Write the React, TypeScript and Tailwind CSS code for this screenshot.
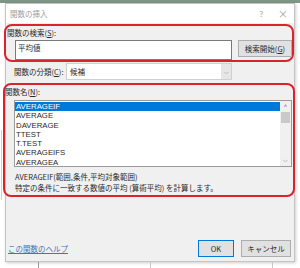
const FUNCS = ["AVERAGEIF", "AVERAGE", "DAVERAGE", "TTEST", "T.TEST", "AVERAGEIFS", "AVERAGEA"];

export default function App() {
  return (
    <div className="relative h-[268px] w-[300px] overflow-hidden whitespace-nowrap bg-white text-[7.5px] text-[#2a2a2a] [font-family:'Noto_Sans_CJK_JP','Noto_Sans',sans-serif]">
      <div className="h-[3px] bg-[#7f9585]" />
      {/* spreadsheet remnants around the dialog */}
      <div className="absolute bottom-0 left-[38px] h-[6px] w-px bg-[#9a9a9a]" />
      <div className="absolute bottom-0 left-[150px] h-[6px] w-px bg-[#c8c8c8]" />
      <div className="absolute bottom-0 left-[272px] h-[6px] w-px bg-[#c8c8c8]" />
      <div className="absolute left-[1px] top-[130px] h-[70px] w-px bg-[#d0d0d0]" />

      <div className="ml-[5px] flex h-[259px] w-[290px] flex-col border border-[#c4c4c4] bg-[#f0f0f0] shadow-[1px_1px_3px_rgba(0,0,0,0.2)]">
        <div className="flex h-[19px] items-center bg-white pl-[4px] pr-[6px]">
          <span className="text-[#a0a0a0]">関数の挿入</span>
          <span className="ml-auto mr-[15px] text-[#a0a0a0]">?</span>
          <span className="text-[10px] leading-none text-[#a0a0a0]">×</span>
        </div>

        {/* search */}
        <div className="-ml-[2px] mt-[1px] h-[38px] w-[290px] rounded-[8px] border-2 border-[#d9232d]">
          <div className="h-[14px] pl-[1px] leading-[14px]">
            関数の検索(<span className="underline">S</span>):
          </div>
          <div className="flex items-start">
            <div className="ml-[9px] h-[20px] w-[217px] border border-[#7a7a7a] bg-white pl-[2px] leading-[13px]">
              平均値
            </div>
            <div className="ml-[6px] flex h-[17px] w-[54px] items-center justify-center border border-[#adadad] bg-[#e1e1e1]">
              検索開始(<span className="underline">G</span>)
            </div>
          </div>
        </div>

        {/* category */}
        <div className="mt-[1px] flex h-[17px] items-center">
          <span className="ml-[8px] w-[52px]">
            関数の分類(<span className="underline">C</span>):
          </span>
          <div className="flex h-[17px] w-[166px] items-stretch border border-[#d0d0d0] bg-white">
            <span className="flex-1 pl-[3px] leading-[15px]">候補</span>
            <span className="flex w-[10px] items-center justify-center bg-[#e6e6e6] text-[6px] text-[#777]">⌵</span>
          </div>
        </div>

        {/* function list */}
        <div className="-ml-[3px] mt-[3px] h-[114px] w-[292px] rounded-[8px] border-2 border-[#d9232d]">
          <div className="h-[14px] leading-[14px]">
            関数名(<span className="underline">N</span>):
          </div>
          <div className="ml-[9px] mt-[1px] flex h-[67px] w-[278px] border border-[#9a9a9a] bg-white">
            <div className="flex-1 pt-[1px] [font-family:'Liberation_Sans',Arial,sans-serif]">
              {FUNCS.map((f, i) => (
                <div
                  key={f}
                  className={
                    "h-[9.3px] pl-[1px] text-[7.8px] leading-[9.3px] " +
                    (i === 0 ? "bg-[#0078d7] text-white" : "")
                  }
                >
                  {f}
                </div>
              ))}
            </div>
            <div className="flex w-[11px] flex-col items-center bg-[#f0f0f0]">
              <span className="h-[11px] text-[6px] leading-[11px] text-[#606060]">^</span>
              <div className="h-[11px] w-[9px] bg-[#c9c9c9]" />
              <span className="mt-auto h-[10px] text-[6px] leading-[8px] text-[#606060]">⌵</span>
            </div>
          </div>
          <div className="ml-[10px] mt-[4px] leading-[11px]">AVERAGEIF(範囲,条件,平均対象範囲)</div>
          <div className="ml-[10px] leading-[11px]">特定の条件に一致する数値の平均 (算術平均) を計算します。</div>
        </div>

        {/* footer */}
        <div className="mt-[43px] flex h-[17px] items-center pr-[3px]">
          <span className="ml-[2px] text-[#3a76c4] underline">この関数のヘルプ</span>
          <div className="ml-auto flex h-[17px] w-[36px] items-center justify-center border border-[#0078d7] bg-[#e1e1e1]">
            OK
          </div>
          <div className="ml-[7px] flex h-[17px] w-[50px] items-center justify-center border border-[#adadad] bg-[#e1e1e1]">
            キャンセル
          </div>
        </div>
      </div>
    </div>
  );
}
